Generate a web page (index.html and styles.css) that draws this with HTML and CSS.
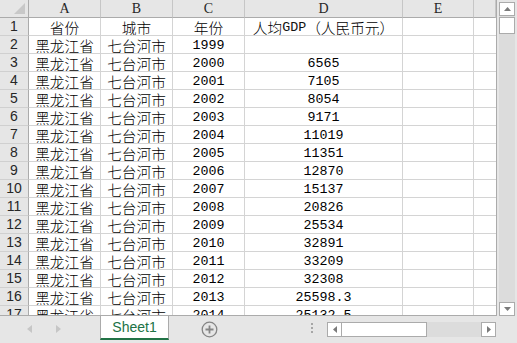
FILE: index.html
```html
<!DOCTYPE html>
<html lang="zh-CN">
<head>
<meta charset="utf-8">
<title>Sheet1</title>
<link rel="stylesheet" href="styles.css">
</head>
<body>
<div class="app">
  <div class="main">
    <div class="sheet">
      <div class="grid">
        <div class="corner"><span class="corner-tri"></span></div>
        <div class="ch">A</div><div class="ch">B</div><div class="ch">C</div><div class="ch">D</div><div class="ch">E</div><div class="ch last"></div>

        <div class="rh">1</div><div class="c">省份</div><div class="c">城市</div><div class="c">年份</div><div class="c">人均<span class="num">GDP</span>（人民币元）</div><div class="c"></div><div class="c last"></div>
        <div class="rh">2</div><div class="c">黑龙江省</div><div class="c">七台河市</div><div class="c num">1999</div><div class="c num"></div><div class="c"></div><div class="c last"></div>
        <div class="rh">3</div><div class="c">黑龙江省</div><div class="c">七台河市</div><div class="c num">2000</div><div class="c num">6565</div><div class="c"></div><div class="c last"></div>
        <div class="rh">4</div><div class="c">黑龙江省</div><div class="c">七台河市</div><div class="c num">2001</div><div class="c num">7105</div><div class="c"></div><div class="c last"></div>
        <div class="rh">5</div><div class="c">黑龙江省</div><div class="c">七台河市</div><div class="c num">2002</div><div class="c num">8054</div><div class="c"></div><div class="c last"></div>
        <div class="rh">6</div><div class="c">黑龙江省</div><div class="c">七台河市</div><div class="c num">2003</div><div class="c num">9171</div><div class="c"></div><div class="c last"></div>
        <div class="rh">7</div><div class="c">黑龙江省</div><div class="c">七台河市</div><div class="c num">2004</div><div class="c num">11019</div><div class="c"></div><div class="c last"></div>
        <div class="rh">8</div><div class="c">黑龙江省</div><div class="c">七台河市</div><div class="c num">2005</div><div class="c num">11351</div><div class="c"></div><div class="c last"></div>
        <div class="rh">9</div><div class="c">黑龙江省</div><div class="c">七台河市</div><div class="c num">2006</div><div class="c num">12870</div><div class="c"></div><div class="c last"></div>
        <div class="rh">10</div><div class="c">黑龙江省</div><div class="c">七台河市</div><div class="c num">2007</div><div class="c num">15137</div><div class="c"></div><div class="c last"></div>
        <div class="rh">11</div><div class="c">黑龙江省</div><div class="c">七台河市</div><div class="c num">2008</div><div class="c num">20826</div><div class="c"></div><div class="c last"></div>
        <div class="rh">12</div><div class="c">黑龙江省</div><div class="c">七台河市</div><div class="c num">2009</div><div class="c num">25534</div><div class="c"></div><div class="c last"></div>
        <div class="rh">13</div><div class="c">黑龙江省</div><div class="c">七台河市</div><div class="c num">2010</div><div class="c num">32891</div><div class="c"></div><div class="c last"></div>
        <div class="rh">14</div><div class="c">黑龙江省</div><div class="c">七台河市</div><div class="c num">2011</div><div class="c num">33209</div><div class="c"></div><div class="c last"></div>
        <div class="rh">15</div><div class="c">黑龙江省</div><div class="c">七台河市</div><div class="c num">2012</div><div class="c num">32308</div><div class="c"></div><div class="c last"></div>
        <div class="rh">16</div><div class="c">黑龙江省</div><div class="c">七台河市</div><div class="c num">2013</div><div class="c num">25598.3</div><div class="c"></div><div class="c last"></div>
        <div class="rh">17</div><div class="c">黑龙江省</div><div class="c">七台河市</div><div class="c num">2014</div><div class="c num">25132.5</div><div class="c"></div><div class="c last"></div>
      </div>
    </div>
    <div class="vscroll">
      <div class="vtrack">
        <div class="sbtn vbtn"><svg width="7" height="4" viewBox="0 0 7 4"><path d="M0 4 L3.5 0 L7 4 Z" fill="#7a7a7a"/></svg></div>
        <div class="vthumb"></div>
        <div class="vfill"></div>
        <div class="sbtn vbtn"><svg width="7" height="4" viewBox="0 0 7 4"><path d="M0 0 L3.5 4 L7 0 Z" fill="#7a7a7a"/></svg></div>
      </div>
    </div>
  </div>
  <div class="tabbar">
    <div class="nav">
      <svg class="navl" width="5" height="8" viewBox="0 0 5 8"><path d="M5 0 L0 4 L5 8 Z" fill="#c6c6c6"/></svg>
      <svg class="navr" width="5" height="8" viewBox="0 0 5 8"><path d="M0 0 L5 4 L0 8 Z" fill="#c6c6c6"/></svg>
    </div>
    <div class="tab">Sheet1</div>
    <div class="add">
      <svg width="17" height="17" viewBox="0 0 17 17"><circle cx="8.5" cy="8.5" r="7.3" fill="none" stroke="#858585" stroke-width="1.3"/><path d="M8.5 4.5 V12.5 M4.5 8.5 H12.5" stroke="#858585" stroke-width="1.8"/></svg>
    </div>
    <div class="dots"><span></span><span></span><span></span></div>
    <div class="hscroll">
      <div class="sbtn hbtn"><svg width="4" height="7" viewBox="0 0 4 7"><path d="M4 0 L0 3.5 L4 7 Z" fill="#7a7a7a"/></svg></div>
      <div class="hthumb"></div>
      <div class="hfill"></div>
      <div class="sbtn hbtn"><svg width="4" height="7" viewBox="0 0 4 7"><path d="M0 0 L4 3.5 L0 7 Z" fill="#7a7a7a"/></svg></div>
    </div>
  </div>
</div>
</body>
</html>
```

FILE: styles.css
```css
html, body {
  margin: 0;
  padding: 0;
  background: #e6e6e6;
}
.app {
  width: 517px;
  height: 343px;
  display: flex;
  flex-direction: column;
  overflow: hidden;
  background: #e6e6e6;
}
.main {
  display: flex;
  height: 316px;
}
.sheet {
  width: 496px;
  height: 315px;
  overflow: hidden;
  background: #ffffff;
  border-right: 1px solid #ababab;
  border-bottom: 1px solid #ababab;
}
.grid {
  display: grid;
  grid-template-columns: 29px 72px 72px 72px 158px 71px 22px;
  grid-auto-rows: 18px;
}
.grid > div {
  box-sizing: border-box;
  border-right: 1px solid #d4d4d4;
  border-bottom: 1px solid #d4d4d4;
  display: flex;
  align-items: center;
  justify-content: center;
  white-space: nowrap;
  overflow: hidden;
  color: #000;
}
.grid > .last {
  border-right: none;
}
.corner {
  background: #e6e6e6;
  position: relative;
  border-right: 1px solid #ababab !important;
  border-bottom: 1px solid #ababab !important;
}
.corner-tri {
  position: absolute;
  right: 3px;
  bottom: 3px;
  width: 0;
  height: 0;
  border-left: 11px solid transparent;
  border-bottom: 11px solid #c8c8c8;
}
.grid > .ch {
  background: #e6e6e6;
  border-right: 1px solid #c6c6c6;
  border-bottom: 1px solid #ababab;
  font-family: "Liberation Serif", "Times New Roman", serif;
  font-size: 14px;
  color: #262626;
  line-height: 17px;
}
.grid > .rh {
  background: #e6e6e6;
  border-right: 1px solid #ababab;
  border-bottom: 1px solid #d0d0d0;
  font-family: "Liberation Sans", Arial, sans-serif;
  font-size: 14px;
  color: #262626;
  line-height: 17px;
}
.c {
  font-family: "Noto Sans CJK SC", "Noto Sans", sans-serif;
  font-size: 14.67px;
  font-weight: 300;
  line-height: 17px;
  padding-top: 1px;
}
.num {
  font-family: "Liberation Mono", "Noto Sans CJK SC", monospace;
  font-size: 13.33px;
  font-weight: 400;
  color: #111;
}
.vscroll {
  width: 20px;
  height: 316px;
  background: #e6e6e6;
  padding-left: 2px;
  box-sizing: border-box;
}
.vtrack {
  width: 16px;
  height: 314px;
  margin-top: 2px;
  display: flex;
  flex-direction: column;
  background: #dcdcdc;
}
.sbtn {
  box-sizing: border-box;
  background: #ffffff;
  border: 1px solid #ababab;
  display: flex;
  align-items: center;
  justify-content: center;
}
.vbtn {
  height: 14px;
}
.vthumb {
  margin-top: 1px;
  height: 17px;
  box-sizing: border-box;
  background: #ffffff;
  border: 1px solid #ababab;
}
.vfill {
  flex: 1;
}
.tabbar {
  height: 27px;
  display: flex;
  align-items: flex-start;
  background: #e6e6e6;
}
.nav {
  width: 100px;
  height: 27px;
  position: relative;
}
.nav svg {
  position: absolute;
  top: 9px;
}
.navl { left: 27px; }
.navr { left: 56px; }
.tab {
  width: 69px;
  height: 24px;
  box-sizing: border-box;
  background: #ffffff;
  border-left: 1px solid #ababab;
  border-right: 1px solid #ababab;
  border-bottom: 2px solid #217346;
  color: #217346;
  font-family: "Liberation Sans", Arial, sans-serif;
  font-size: 14px;
  line-height: 22px;
  text-align: center;
}
.add {
  width: 17px;
  height: 17px;
  margin-left: 32px;
  margin-top: 5px;
}
.add svg { display: block; }
.dots {
  margin-left: 93px;
  margin-top: 7px;
  display: flex;
  flex-direction: column;
  gap: 2px;
}
.dots span {
  width: 2px;
  height: 2px;
  background: #a6a6a6;
}
.hscroll {
  margin-left: 14px;
  margin-top: 6px;
  width: 169px;
  height: 15px;
  display: flex;
  background: #dcdcdc;
}
.hbtn {
  width: 15px;
  height: 15px;
}
.hthumb {
  width: 85px;
  box-sizing: border-box;
  background: #ffffff;
  border: 1px solid #ababab;
  border-left: none;
}
.hfill {
  flex: 1;
}
```
